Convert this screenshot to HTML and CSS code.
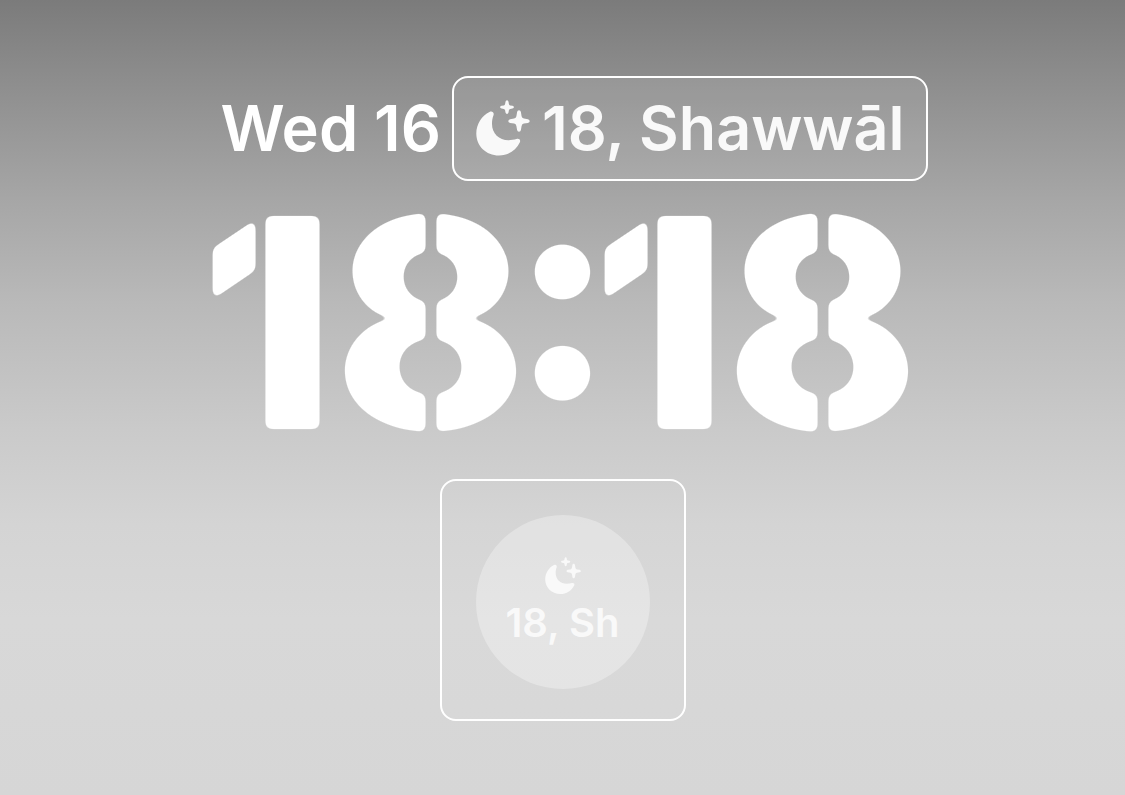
FILE: index.html
```html
<!DOCTYPE html>
<html lang="en">
<head>
<meta charset="utf-8">
<meta name="viewport" content="width=device-width, initial-scale=1">
<title>Lock screen</title>
<link rel="stylesheet" href="styles.css">
</head>
<body>
<svg class="defs" aria-hidden="true">
  <filter id="round-corners" color-interpolation-filters="sRGB">
    <feGaussianBlur stdDeviation="3"/>
    <feColorMatrix values="0 0 0 0 1  0 0 0 0 1  0 0 0 0 1  0 0 0 8 -2.5"/>
  </filter>
  <symbol id="moon-stars" viewBox="0 0 54 57">
    <path d="M13.500 12C15.800 10.800 18.500 12.500 17.500 15.200C16.300 18.200 16 21 16 24C16 33.500 23 40.200 32.500 40.200C35.500 40.200 38 39.700 40.500 39C43 38.300 44.900 39.800 43.900 42.300C40 50.500 32 55.500 23 55.500C10 55.500 .3 46 .3 33.500C.3 24 6 15.500 13.500 12Z"/>
    <path d="M31 .2Q32.300 .2 32.500 1.700L32.900 4Q33.100 5.100 34.200 5.400L36.500 5.800Q37.900 6.200 37.900 7.200Q37.900 8.200 36.500 8.500L34.200 9Q33.100 9.300 32.900 10.300L32.500 12.500Q32.200 13.900 31 13.900Q29.800 13.900 29.500 12.500L29.100 10.300Q28.900 9.300 27.800 9L25.500 8.500Q24.100 8.200 24.100 7.200Q24.100 6.200 25.500 5.800L27.800 5.400Q28.900 5.100 29.100 4L29.500 1.700Q29.700 .2 31 .2Z"/>
    <path d="M43 10.300Q44.600 10.300 44.900 12L45.600 16.200Q45.900 18.200 47.900 18.600L51.900 19.300Q53.700 19.600 53.700 21.200Q53.700 22.600 51.900 22.900L47.900 23.600Q45.900 24 45.600 26L44.900 30Q44.600 31.800 43 31.800Q41.400 31.800 41.100 30L40.400 26Q40.100 24 38.100 23.600L34.100 22.900Q32.300 22.600 32.300 21.200Q32.300 19.600 34.100 19.300L38.100 18.600Q40.100 18.200 40.400 16.200L41.100 12Q41.400 10.300 43 10.300Z"/>
  </symbol>
</svg>
<main class="screen">
  <header class="date-row">
    <p class="date">Wed 16</p>
    <div class="frame inline-widget">
      <svg class="icon" aria-hidden="true"><use href="#moon-stars"/></svg>
      <span>18, Shawwāl</span>
    </div>
  </header>
  <time class="clock" datetime="18:18"><span class="one">1</span><span class="eight">8</span><span class="colon">:</span><span class="one">1</span><span class="eight">8</span></time>
  <section class="frame widget-frame">
    <div class="round-widget">
      <svg class="icon icon-small" aria-hidden="true"><use href="#moon-stars"/></svg>
      <span>18, Sh</span>
    </div>
  </section>
</main>
</body>
</html>
```
FILE: styles.css
```css
* { box-sizing: border-box; }
body {
  margin: 0;
  font-family: Inter, "Liberation Sans", sans-serif;
  color: #fff;
}
.defs { position: absolute; width: 0; height: 0; }
.screen {
  min-height: 100vh;
  padding: 76px 16px 32px;
  display: flex;
  flex-direction: column;
  align-items: center;
  background: linear-gradient(#7b7b7b, #8d8d8d 10%, #a6a6a6 25%, #b9b9b9 38%, #cacaca 54%, #d4d4d4 66%, #d8d8d8 78%, #d6d6d6);
}
.date-row {
  display: flex;
  align-items: center;
  gap: 11px;
  margin-left: 24px;
  line-height: 81px;
  font-weight: 600;
  white-space: nowrap;
}
.date { margin: 0; font-size: 63px; }
.frame {
  border: 2px solid #fff;
  border-radius: 16px;
}
.inline-widget {
  display: flex;
  align-items: center;
  gap: 12px;
  padding: 10px 22px;
  background: rgba(255, 255, 255, .09);
  color: #f9f9f9;
  font-size: 61px;
}
.icon { width: 54px; height: 57px; fill: #f9f9f9; }
.icon-small { width: 36px; height: 38px; }

/* Each digit is centred in its own cell; masks cut the stencil bridges. */
.clock {
  display: grid;
  grid-template-columns: 128px 200px 64px 128px 200px;
  height: 298px;
  font-size: 290px;
  line-height: 283px;
  font-weight: 860;
  font-feature-settings: "case";
  filter: url(#round-corners);
}
.clock span {
  display: flex;
  justify-content: center;
}
.one {
  mask: linear-gradient(90deg, #000 51px, transparent 52px 63px, #000 64px);
}
.eight {
  font-weight: 830;
  mask: linear-gradient(90deg, #000 calc(50% - 7px), transparent calc(50% - 6px) calc(50% + 6px), #000 calc(50% + 7px));
}
.colon { font-weight: 820; }
.widget-frame {
  padding: 34px 34px 30px;
  background: rgba(255, 255, 255, .03);
}
.round-widget {
  display: flex;
  flex-direction: column;
  align-items: center;
  justify-content: center;
  gap: 4px;
  width: 174px;
  height: 174px;
  border-radius: 50%;
  background: rgba(255, 255, 255, .31);
  color: #f9f9f9;
  font-size: 40px;
  line-height: 48px;
  font-weight: 600;
}
```
